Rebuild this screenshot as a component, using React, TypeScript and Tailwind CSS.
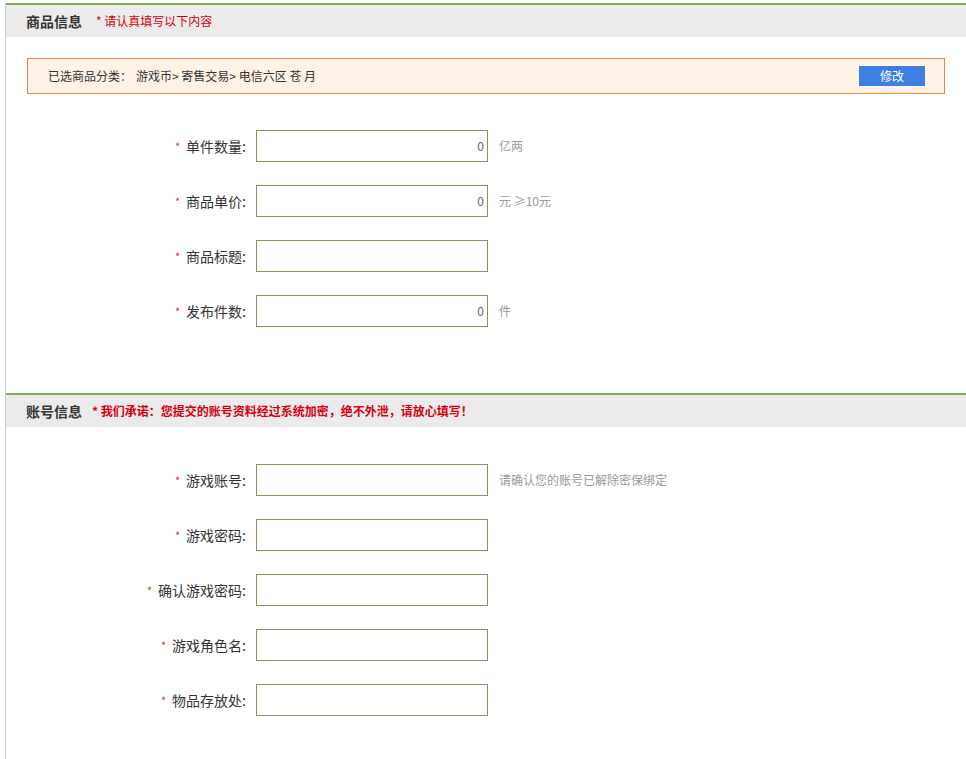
import React from "react";

interface IFieldRow {
    label: string;
    value?: string;
    unit?: string;
}

const goodsRows: IFieldRow[] = [
    { label: "单件数量", value: "0", unit: "亿两" },
    { label: "商品单价", value: "0", unit: "元 ≥10元" },
    { label: "商品标题" },
    { label: "发布件数", value: "0", unit: "件" },
];

const accountRows: IFieldRow[] = [
    { label: "游戏账号", unit: "请确认您的账号已解除密保绑定" },
    { label: "游戏密码" },
    { label: "确认游戏密码" },
    { label: "游戏角色名" },
    { label: "物品存放处" },
];

const FormRow: React.FunctionComponent<{ row: IFieldRow }> = ({ row }) => {
    return (
        <div className="flex items-center h-[32px]">
            <div className="w-[240px] flex items-center justify-end text-[14px] text-[#333]">
                <span className="text-[#e0303a] text-[11px] mr-[6px]">*</span>
                <span>{row.label}:</span>
            </div>
            <div className="ml-[10px] w-[232px] h-[32px] border border-[#7d9a5e] bg-white flex items-center justify-end pr-[3px] text-[12px] text-[#666]">
                {row.value}
            </div>
            {row.unit && <span className="ml-[11px] text-[12px] text-[#999]">{row.unit}</span>}
        </div>
    );
};

const SectionHeader: React.FunctionComponent<{ title: string; note: string; bold?: boolean; gap: string }> = (props) => {
    return (
        <div className="border-t-2 border-[#7fae55]">
            <div className="h-[32px] bg-[#ebebeb] flex items-center pl-[20px]">
                <span className="text-[14px] font-bold text-[#333]">{props.title}</span>
                <span className={`${props.gap} text-[12px] text-[#d7000f] ${props.bold ? "font-bold" : ""}`}>
                    {props.note}
                </span>
            </div>
        </div>
    );
};

export default function App() {
    return (
        <div
            className="w-[966px] h-[759px] overflow-hidden bg-white pt-[3px]"
            style={{ fontFamily: '"Noto Sans CJK SC", "Noto Sans", sans-serif' }}
        >
            <div className="ml-[5px] border-l border-[#cfcfcf] min-h-[756px]">
                <SectionHeader title="商品信息" note="* 请认真填写以下内容" gap="ml-[14px]" />
                <div className="pt-[21px] pl-[21px]">
                    <div className="w-[918px] h-[36px] border border-[#e9893f] bg-[#fff3e7] flex items-center justify-between pl-[20px] pr-[19px] text-[12px] text-[#333]">
                        <span>
                            <span className="mr-[4px]">已选商品分类：</span>游戏币&gt; 寄售交易&gt; 电信六区 苍 月
                        </span>
                        <button className="w-[66px] h-[20px] bg-[#3c7fe0] text-white text-[12px]">修改</button>
                    </div>
                </div>
                <div className="pt-[36px] flex flex-col gap-[23px]">
                    {goodsRows.map((row, index) => (
                        <FormRow key={index} row={row} />
                    ))}
                </div>
                <div className="mt-[66px]">
                    <SectionHeader title="账号信息" note="* 我们承诺：您提交的账号资料经过系统加密，绝不外泄，请放心填写！" bold gap="ml-[10px]" />
                </div>
                <div className="pt-[37px] flex flex-col gap-[23px]">
                    {accountRows.map((row, index) => (
                        <FormRow key={index} row={row} />
                    ))}
                </div>
            </div>
        </div>
    );
}
